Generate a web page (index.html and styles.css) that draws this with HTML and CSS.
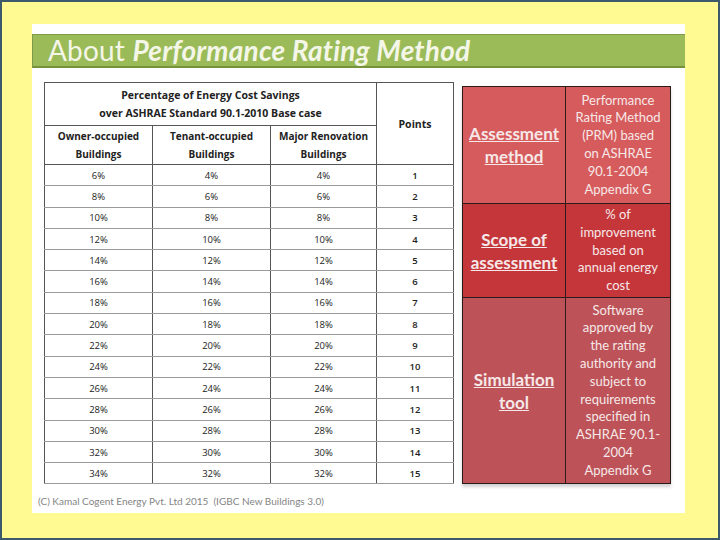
FILE: index.html
```html
<!DOCTYPE html>
<html>
<head>
<meta charset="utf-8">
<link rel="stylesheet" href="styles.css">
</head>
<body>
<div class="frame">
  <div class="slide">
    <div class="titlebar"><span class="about">About</span> <span class="prm">Performance Rating Method</span></div>
    <div class="content">
      <table class="points">
        <colgroup>
          <col class="w1"><col class="w2"><col class="w3"><col class="w4">
        </colgroup>
        <thead>
          <tr class="h1">
            <th colspan="3">Percentage of Energy Cost Savings<br>over ASHRAE Standard 90.1-2010 Base case</th>
            <th rowspan="2" class="pts">Points</th>
          </tr>
          <tr class="h2">
            <th>Owner-occupied<br>Buildings</th>
            <th>Tenant-occupied<br>Buildings</th>
            <th>Major Renovation<br>Buildings</th>
          </tr>
        </thead>
        <tbody>
          <tr><td>6%</td><td>4%</td><td>4%</td><td>1</td></tr>
          <tr><td>8%</td><td>6%</td><td>6%</td><td>2</td></tr>
          <tr><td>10%</td><td>8%</td><td>8%</td><td>3</td></tr>
          <tr class="dk"><td>12%</td><td>10%</td><td>10%</td><td>4</td></tr>
          <tr><td>14%</td><td>12%</td><td>12%</td><td>5</td></tr>
          <tr><td>16%</td><td>14%</td><td>14%</td><td>6</td></tr>
          <tr class="dk"><td>18%</td><td>16%</td><td>16%</td><td>7</td></tr>
          <tr class="dk"><td>20%</td><td>18%</td><td>18%</td><td>8</td></tr>
          <tr><td>22%</td><td>20%</td><td>20%</td><td>9</td></tr>
          <tr><td>24%</td><td>22%</td><td>22%</td><td>10</td></tr>
          <tr class="dk"><td>26%</td><td>24%</td><td>24%</td><td>11</td></tr>
          <tr class="dk"><td>28%</td><td>26%</td><td>26%</td><td>12</td></tr>
          <tr class="dk"><td>30%</td><td>28%</td><td>28%</td><td>13</td></tr>
          <tr class="dk"><td>32%</td><td>30%</td><td>30%</td><td>14</td></tr>
          <tr class="dk"><td>34%</td><td>32%</td><td>32%</td><td>15</td></tr>
        </tbody>
      </table>
      <table class="method">
        <colgroup>
          <col class="m1"><col class="m2">
        </colgroup>
        <tr class="r1">
          <td class="lab"><u>Assessment method</u></td>
          <td class="desc">Performance Rating Method (PRM) based on ASHRAE 90.1-2004 Appendix G</td>
        </tr>
        <tr class="r2">
          <td class="lab"><u>Scope of assessment</u></td>
          <td class="desc">% of improvement based on annual energy cost</td>
        </tr>
        <tr class="r3">
          <td class="lab"><u>Simulation tool</u></td>
          <td class="desc">Software approved by the rating authority and subject to requirements specified in ASHRAE 90.1-2004 Appendix G</td>
        </tr>
      </table>
    </div>
    <div class="footer">(C) Kamal Cogent Energy Pvt. Ltd 2015&nbsp; (IGBC New Buildings 3.0)</div>
  </div>
</div>
</body>
</html>
```

FILE: styles.css
```css
html, body {
  margin: 0;
  padding: 0;
}
body {
  width: 720px;
  height: 540px;
  overflow: hidden;
  font-family: "Open Sans", "Liberation Sans", sans-serif;
}
.frame {
  box-sizing: border-box;
  width: 720px;
  height: 540px;
  border: 2px solid #3d5a6c;
  background: #fffb92;
  padding: 22px 0 0 30px;
}
.slide {
  width: 653px;
  height: 489px;
  background: #ffffff;
  padding-top: 10px;
  box-sizing: border-box;
  display: flex;
  flex-direction: column;
}
.titlebar {
  box-sizing: border-box;
  height: 34px;
  background: #9bbb59;
  border-top: 1px solid #7f9a48;
  border-left: 1px solid #7f9a48;
  border-bottom: 2px solid #76923c;
  padding-left: 15px;
  color: #f4f6e8;
  font-family: Lato, "Open Sans", sans-serif;
  font-size: 28px;
  line-height: 30px;
  white-space: nowrap;
  letter-spacing: 0.2px;
}
.titlebar .prm {
  font-weight: bold;
  font-style: italic;
}
.content {
  display: flex;
  align-items: flex-start;
  padding: 14px 0 0 12px;
  gap: 9px;
}
table.points {
  border-collapse: collapse;
  width: 409px;
  border: 1.5px solid #444;
  color: #222;
  font-size: 9.5px;
  text-align: center;
  table-layout: fixed;
}
col.w1 { width: 108px; }
col.w2 { width: 118px; }
col.w3 { width: 106px; }
col.w4 { width: 77px; }
table.points th {
  font-weight: bold;
  border: 1px solid #555;
  padding: 0;
  line-height: 18px;
}
table.points tr.h1 th {
  height: 42px;
  font-size: 10.5px;
}
table.points tr.h2 th {
  height: 38px;
  font-size: 10px;
}
table.points th.pts {
  font-size: 10.5px;
}
table.points td {
  height: 20.3px;
  padding: 0;
  border-left: 1px solid #555;
  border-right: 1px solid #555;
  border-top: 1px solid #9a9a9a;
  border-bottom: 1px solid #9a9a9a;
}
table.points tr.dk td {
  border-top: 1px solid #555;
}
table.points td:last-child {
  font-weight: 600;
  color: #222;
}
table.method {
  margin-top: 4px;
  margin-left: -1px;
  border-collapse: collapse;
  width: 208px;
  table-layout: fixed;
  color: #f6e8e8;
  font-family: Lato, "Open Sans", sans-serif;
  text-align: center;
  box-shadow: 0 3px 3px rgba(0,0,0,0.18);
}
col.m1 { width: 103px; }
col.m2 { width: 105px; }
table.method td {
  border: 1px solid #2a1a1a;
  padding: 0 9px;
}
table.method td.lab {
  padding: 0 2px;
  font-weight: bold;
  font-size: 17px;
  line-height: 23px;
}
table.method td.desc {
  font-size: 13px;
  line-height: 17.8px;
}
table.method tr.r1 td { background: #d65b5c; height: 116px; }
table.method tr.r2 td { background: #c4363a; height: 93px; }
table.method tr.r3 td { background: #bd5358; height: 185px; }
.footer {
  margin-top: 11px;
  padding-left: 6px;
  font-family: Lato, "Open Sans", sans-serif;
  font-size: 10px;
  color: #858585;
}
```
